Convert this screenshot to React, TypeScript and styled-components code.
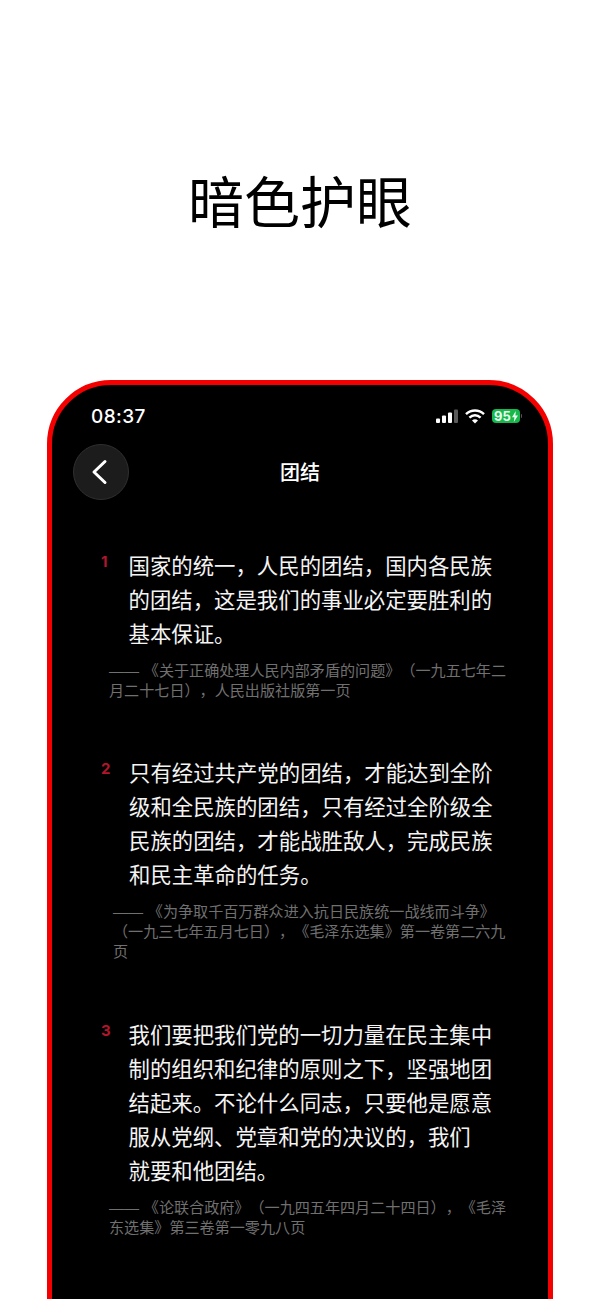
import React from "react"
import styled, { createGlobalStyle } from "styled-components"

const GlobalStyle = createGlobalStyle`
  html, body {
    margin: 0;
    padding: 0;
    background: #fff;
  }
  body {
    font-family: "Noto Sans CJK SC", "Liberation Sans", sans-serif;
    text-spacing-trim: space-all;
  }
`

const Page = styled.div`
  width: 600px;
  height: 1299px;
  overflow: hidden;
  background: #fff;
`

const Headline = styled.h1`
  height: 380px;
  margin: 0;
  padding-top: 164px;
  box-sizing: border-box;
  text-align: center;
  font-family: "Noto Sans CJK SC", serif;
  font-size: 56px;
  line-height: 70px;
  font-weight: 400;
  color: #000;
`

const Phone = styled.div`
  margin: 0 47px;
  height: 1000px;
  box-sizing: border-box;
  border: 5px solid #f40000;
  border-radius: 64px;
  background: #000;
  color: #fff;
  overflow: hidden;
`

const StatusBar = styled.div`
  display: flex;
  align-items: center;
  justify-content: space-between;
  height: 22px;
  padding: 20px 26px 0 39px;
`

const Clock = styled.span`
  font-family: "Inter", "Liberation Sans", sans-serif;
  font-size: 19px;
  font-weight: 500;
  letter-spacing: 0.4px;
`

const StatusIcons = styled.div`
  display: flex;
  align-items: center;
  gap: 7px;
`

const Battery = styled.div`
  position: relative;
  display: flex;
  align-items: center;
  justify-content: center;
  gap: 1px;
  width: 28px;
  height: 14px;
  margin-right: 2px;
  border-radius: 4px;
  background: #17b84c;
  color: #e9fff0;
  font-family: "Inter", "Liberation Sans", sans-serif;
  font-size: 13px;
  font-weight: 700;

  &::after {
    content: "";
    position: absolute;
    right: -2px;
    top: 5px;
    width: 1.5px;
    height: 4px;
    border-radius: 0 1px 1px 0;
    background: #555;
  }
`

const NavBar = styled.div`
  position: relative;
  display: flex;
  align-items: center;
  justify-content: center;
  height: 56px;
  margin-top: 17px;
`

const BackButton = styled.button`
  position: absolute;
  left: 21px;
  top: 0;
  display: flex;
  align-items: center;
  justify-content: center;
  width: 56px;
  height: 56px;
  padding: 0;
  border: 1px solid #303030;
  border-radius: 50%;
  background: #1c1c1c;
`

const NavTitle = styled.div`
  margin-top: -2px;
  font-size: 20px;
  font-weight: 500;
`

const Quotes = styled.div`
  display: flex;
  flex-direction: column;
  margin-top: 48px;
`

const Quote = styled.div<{ $after: number }>`
  margin-bottom: ${(p) => p.$after}px;
`

const Body = styled.div<{ $left: number }>`
  position: relative;
  padding-left: ${(p) => p.$left}px;
  font-size: 21.4px;
  line-height: 34px;
  color: #f4f4f4;
  white-space: nowrap;
`

const Num = styled.span`
  position: absolute;
  left: 49px;
  top: 4px;
  font-family: "Inter", "Liberation Sans", sans-serif;
  font-size: 15px;
  line-height: 20px;
  font-weight: 700;
  color: #b3162c;
`

const Source = styled.div<{ $left: number }>`
  margin-top: 9px;
  padding-left: ${(p) => p.$left}px;
  font-size: 15.1px;
  line-height: 20px;
  color: #707070;
  white-space: nowrap;
`

const Dash = styled.span`
  margin-right: 4.6px;
  font-family: "Liberation Sans", sans-serif;
  line-height: 0;
`

const quotes = [
  {
    body: ["国家的统一，人民的团结，国内各民族", "的团结，这是我们的事业必定要胜利的", "基本保证。"],
    source: ["《关于正确处理人民内部矛盾的问题》（一九五七年二", "月二十七日），人民出版社版第一页"],
    left: 76.5,
    sourceLeft: 57,
    after: 56,
  },
  {
    body: ["只有经过共产党的团结，才能达到全阶", "级和全民族的团结，只有经过全阶级全", "民族的团结，才能战胜敌人，完成民族", "和民主革命的任务。"],
    source: ["《为争取千百万群众进入抗日民族统一战线而斗争》", "（一九三七年五月七日），《毛泽东选集》第一卷第二六九", "页"],
    left: 77,
    sourceLeft: 61,
    after: 57,
  },
  {
    body: ["我们要把我们党的一切力量在民主集中", "制的组织和纪律的原则之下，坚强地团", "结起来。不论什么同志，只要他是愿意", "服从党纲、党章和党的决议的，我们", "就要和他团结。"],
    source: ["《论联合政府》（一九四五年四月二十四日），《毛泽", "东选集》第三卷第一零九八页"],
    left: 76.5,
    sourceLeft: 57,
    after: 0,
  },
]

const App: React.FC = () => {
  return (
    <Page>
      <GlobalStyle />
      <Headline>暗色护眼</Headline>
      <Phone>
        <StatusBar>
          <Clock>08:37</Clock>
          <StatusIcons>
            <svg width="22" height="14" viewBox="0 0 22 14" fill="#fff">
              <rect x="0" y="9.5" width="4" height="4.5" rx="1" />
              <rect x="6" y="6.5" width="4" height="7.5" rx="1" />
              <rect x="12" y="3.5" width="4" height="10.5" rx="1" />
              <rect x="18" y="0.5" width="4" height="13.5" rx="1" fill="#5a5a5a" />
            </svg>
            <svg width="20" height="15" viewBox="0 0 20 15" fill="none" stroke="#fff" strokeWidth="2.5">
              <path d="M1 5.2C6.2 .4 13.8 .4 19 5.2" />
              <path d="M4.4 8.6C7.8 5.6 12.2 5.6 15.6 8.6" />
              <path d="M10 14.6L7 11.4C8.8 10 11.2 10 13 11.4Z" fill="#fff" stroke="none" />
            </svg>
            <Battery>
              95
              <svg width="6" height="11" viewBox="0 0 6 11" fill="#e9fff0">
                <path d="M3.8 0L0 6.2H2.4L1.8 11L6 4.4H3.4Z" />
              </svg>
            </Battery>
          </StatusIcons>
        </StatusBar>
        <NavBar>
          <BackButton aria-label="back">
            <svg width="20" height="28" viewBox="0 0 20 28" fill="none" stroke="#fff" strokeWidth="3" strokeLinecap="round" strokeLinejoin="round">
              <path d="M14 3.5L3 14L14 24.5" />
            </svg>
          </BackButton>
          <NavTitle>团结</NavTitle>
        </NavBar>
        <Quotes>
          {quotes.map((q, i) => (
            <Quote key={i} $after={q.after}>
              <Body $left={q.left}>
                <Num>{i + 1}</Num>
                {q.body.map((line, j) => (
                  <div key={j}>{line}</div>
                ))}
              </Body>
              <Source $left={q.sourceLeft}>
                {q.source.map((line, j) => (
                  <div key={j}>
                    {j === 0 && <Dash>——</Dash>}
                    {line}
                  </div>
                ))}
              </Source>
            </Quote>
          ))}
        </Quotes>
      </Phone>
    </Page>
  )
}

export default App
